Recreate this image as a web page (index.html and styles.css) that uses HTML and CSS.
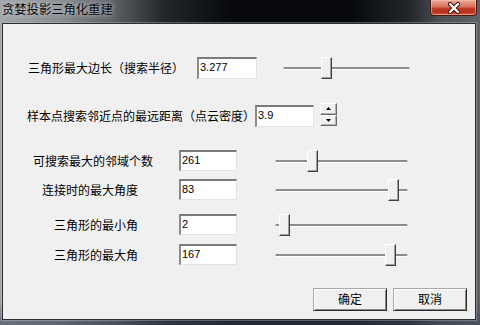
FILE: index.html
```html
<!DOCTYPE html>
<html>
<head>
<meta charset="utf-8">
<link rel="stylesheet" href="styles.css">
</head>
<body>
<div class="window">
  <div class="titlebar">
    <span class="title">贪婪投影三角化重建</span>
    <div class="close">
      <svg width="18" height="12" viewBox="0 0 18 12"><path d="M5 2 L13 10 M13 2 L5 10" stroke="#3a1008" stroke-width="4.2" stroke-linecap="round"/><path d="M5 2 L13 10 M13 2 L5 10" stroke="#ffffff" stroke-width="2.4" stroke-linecap="round"/></svg>
    </div>
  </div>
  <div class="client">
    <div class="row row1">
      <span class="label l1">三角形最大边长（搜索半径）</span>
      <div class="edit e1">3.277</div>
      <div class="slider s1"><div class="track"></div><div class="thumb" style="left:38px"></div></div>
    </div>
    <div class="row row2">
      <span class="label l2">样本点搜索邻近点的最远距离（点云密度）</span>
      <div class="edit e2">3.9</div>
      <div class="spin">
        <div class="spinbtn"><svg width="5" height="3" viewBox="0 0 5 3"><path d="M0 3 L2.5 0 L5 3 Z" fill="#000"/></svg></div>
        <div class="spinbtn"><svg width="5" height="3" viewBox="0 0 5 3"><path d="M0 0 L2.5 3 L5 0 Z" fill="#000"/></svg></div>
      </div>
    </div>
    <div class="row grid-row r3">
      <span class="label lc">可搜索最大的邻域个数</span>
      <div class="edit e3">261</div>
      <div class="slider s3"><div class="track"></div><div class="thumb" style="left:32px"></div></div>
    </div>
    <div class="row grid-row r4">
      <span class="label lc lr">连接时的最大角度</span>
      <div class="edit e3">83</div>
      <div class="slider s3"><div class="track"></div><div class="thumb" style="left:113px"></div></div>
    </div>
    <div class="row grid-row r5">
      <span class="label lc lr">三角形的最小角</span>
      <div class="edit e3">2</div>
      <div class="slider s3"><div class="track"></div><div class="thumb" style="left:4px"></div></div>
    </div>
    <div class="row grid-row r6">
      <span class="label lc lr">三角形的最大角</span>
      <div class="edit e3">167</div>
      <div class="slider s3"><div class="track"></div><div class="thumb" style="left:110px"></div></div>
    </div>
    <div class="buttons">
      <div class="btn">确定</div>
      <div class="btn">取消</div>
    </div>
  </div>
</div>
</body>
</html>
```

FILE: styles.css
```css
html, body {
  margin: 0;
  padding: 0;
}
body {
  width: 480px;
  height: 325px;
  overflow: hidden;
  background: #15181c;
  font-family: "Noto Sans CJK SC", "Liberation Sans", sans-serif;
  font-size: 12px;
  color: #000;
}
.window {
  width: 480px;
  height: 325px;
  display: flex;
  flex-direction: column;
  background:
    linear-gradient(to bottom, rgba(0,0,0,0) 0, rgba(0,0,0,0) 300px, rgba(60,70,85,0.6) 325px),
    linear-gradient(to right, #a2a6aa 0, #8a8e93 60px, #5a5e63 115px, #22262a 165px, #080a0d 230px, #06080b 350px, #23272b 410px, #4d5156 440px, #5e6266 480px);
}
.titlebar {
  height: 23px;
  display: flex;
  align-items: flex-start;
  justify-content: space-between;
}
.title {
  margin: 2px 0 0 2px;
  font-size: 12.3px;
  line-height: 15px;
  color: #0a0a0a;
  text-shadow: 0 0 4px rgba(220,225,230,0.8), 0 0 8px rgba(200,205,210,0.6);
}
.close {
  width: 45px;
  height: 15px;
  margin-right: 3px;
  border: 1px solid #4a1a12;
  border-top: none;
  border-radius: 0 0 4px 4px;
  background: linear-gradient(to bottom, #e9a898 0, #d9705c 45%, #c23d26 55%, #b8301a 80%, #d2604a 100%);
  box-shadow: inset 0 0 0 1px rgba(255,200,190,0.5);
  display: flex;
  align-items: center;
  justify-content: center;
}
.close svg { display: block; }
.client {
  flex: 1;
  margin: 0 4px 5px 2px;
  border: 1px solid #2b2f34;
  background: #f0f0f0;
  display: flex;
  flex-direction: column;
  box-shadow: 0 0 0 1px rgba(200,205,210,0.35);
}
.row {
  display: flex;
  align-items: center;
  height: 22px;
  flex: none;
}
.row1 { margin-top: 33px; }
.row2 { margin-top: 26px; }
.label {
  white-space: nowrap;
  line-height: 14px;
  flex: none;
}
.l1 { margin-left: 25px; width: 169px; }
.l2 { margin-left: 24px; width: 228px; }
.edit {
  flex: none;
  box-sizing: border-box;
  height: 22px;
  background: #fff;
  border-style: solid;
  border-width: 2px 1px 1px 2px;
  border-color: #7a7a7a #e3e3e3 #e3e3e3 #8a8a8a;
  font-family: "Liberation Sans", sans-serif;
  font-size: 11px;
  line-height: 17px;
  padding-left: 1px;
  color: #000;
}
.e1 { width: 60px; }
.e2 { width: 59px; }
.slider {
  position: relative;
  height: 22px;
  flex: none;
}
.s1 { width: 127px; margin-left: 26px; }
.s3 { width: 133px; margin-left: 38px; }
.track {
  position: absolute;
  left: 0;
  right: 0;
  top: 10px;
  height: 2px;
  background: #8c8c8c;
  border-bottom: 1px solid #ffffff;
  border-left: 1px solid #d0d0d0;
  border-right: 1px solid #d0d0d0;
}
.thumb {
  position: absolute;
  top: 0;
  width: 11px;
  height: 22px;
  box-sizing: border-box;
  background: #f0f0f0;
  border-style: solid;
  border-width: 1px;
  border-color: #ffffff #404040 #404040 #ffffff;
  box-shadow: inset -1px -1px 0 #a0a0a0;
}
.spin {
  flex: none;
  margin-left: 6px;
  width: 17px;
  align-self: flex-start;
  margin-top: -2px;
  display: flex;
  flex-direction: column;
}
.spinbtn {
  box-sizing: border-box;
  height: 11.5px;
  background: #f0f0f0;
  border-style: solid;
  border-width: 1px;
  border-color: #ffffff #6a6a6a #6a6a6a #ffffff;
  box-shadow: inset -1px -1px 0 #b0b0b0;
  display: flex;
  align-items: center;
  justify-content: center;
}
.spinbtn svg { display: block; }
.grid-row { height: 21px; }
.r3 { margin-top: 23px; }
.r4 { margin-top: 8px; }
.r5 { margin-top: 14px; }
.r6 { margin-top: 9px; }
.lc {
  width: 150px;
  text-align: right;
  box-sizing: border-box;
}
.lr { padding-right: 15px; }
.e3 {
  width: 58px;
  height: 21px;
  margin-left: 26px;
  line-height: 16px;
}
.buttons {
  margin-top: auto;
  margin-bottom: 8px;
  padding-right: 8px;
  display: flex;
  justify-content: flex-end;
  gap: 6px;
}
.btn {
  box-sizing: border-box;
  width: 74px;
  height: 23px;
  background: #f0f0f0;
  border-style: solid;
  border-width: 1px;
  border-color: #a8a8a8 #2a2a2a #2a2a2a #a8a8a8;
  box-shadow: inset 1px 1px 0 #ffffff, inset -1px -1px 0 #8a8a8a;
  text-align: center;
  line-height: 20px;
  font-size: 12px;
}
```
